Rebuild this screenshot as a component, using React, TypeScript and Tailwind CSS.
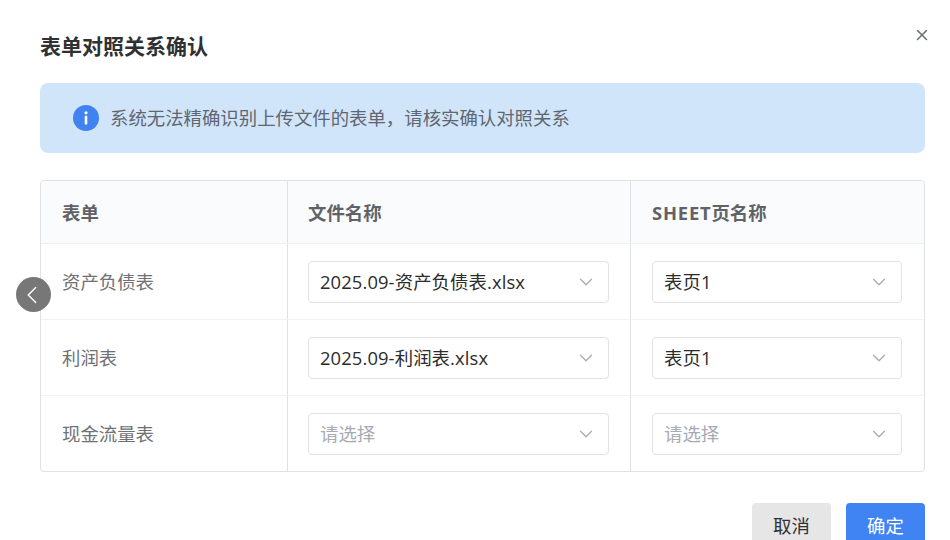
import React from 'react';
import { ChevronDown, ChevronLeft, X } from 'lucide-react';

interface RowData {
  label: string;
  file: string;
  sheet: string;
}

const rows: RowData[] = [
  { label: '资产负债表', file: '2025.09-资产负债表.xlsx', sheet: '表页1' },
  { label: '利润表', file: '2025.09-利润表.xlsx', sheet: '表页1' },
  { label: '现金流量表', file: '', sheet: '' },
];

const SelectBox: React.FC<{ value: string; width: string }> = ({ value, width }) => (
  <div className={`flex h-[42px] items-center justify-between rounded-[4px] border border-[#e2e3e6] bg-white pl-[11px] pr-[11px] ${width}`}>
    {/* placeholder is lighter than a picked value */}
    <span className={value ? 'tracking-[0.1px] text-[#2c2c2c]' : 'text-[#a8abb2]'}>{value || '请选择'}</span>
    <ChevronDown className="h-[22px] w-[22px] text-[#a8abb2]" strokeWidth={1.4} />
  </div>
);

const App: React.FC = () => {
  return (
    <div
      className="relative h-[540px] w-[950px] overflow-hidden bg-white pl-[40px] pr-[25px] text-[18.4px]"
      style={{ fontFamily: '"Open Sans", "Noto Sans CJK SC", sans-serif' }}
    >
      {/* Header */}
      <div className="flex h-[83px] items-start justify-between">
        <h2 className="mt-[31px] text-[21px] leading-[30px] font-bold text-[#303133]">表单对照关系确认</h2>
        <button className="mt-[26px] -mr-[6px] text-[#6b6e73]">
          <X className="h-[18px] w-[18px]" strokeWidth={2} />
        </button>
      </div>

      {/* Notice */}
      <div className="flex h-[70px] items-center gap-[11px] rounded-[8px] bg-[#d0e5fa] pl-[33px] text-[#5f6670]">
        <svg viewBox="0 0 26 26" className="h-[26px] w-[26px]">
          <circle cx="13" cy="13" r="13" fill="#3f82f0" />
          <circle cx="13" cy="7.8" r="1.6" fill="#fff" />
          <rect x="11.7" y="10.8" width="2.6" height="8.8" rx="0.6" fill="#fff" />
        </svg>
        <span>系统无法精确识别上传文件的表单，请核实确认对照关系</span>
      </div>

      {/* Mapping table */}
      <div className="mt-[27px] h-[292px] overflow-hidden rounded-[4px] border border-[#dfe1e5]">
        <div className="grid h-[63px] grid-cols-[246px_343px_1fr] border-b border-[#eeeff1] bg-[#fafbfc] font-bold text-[#606266]">
          <div className="flex items-center pl-[21px] pt-px">表单</div>
          <div className="flex items-center border-l border-[#dfe1e5] pl-[20px] pt-px">文件名称</div>
          <div className="flex items-center border-l border-[#dfe1e5] pl-[21px] pt-px">
            <span className="tracking-[0.8px]">SHEET</span>页名称
          </div>
        </div>
        {rows.map((row, i) => (
          <div
            key={row.label}
            className={`grid h-[76px] grid-cols-[246px_343px_1fr] ${i < 2 ? 'border-b border-[#f0f1f3]' : ''}`}
          >
            <div className="flex items-center pl-[21px] text-[#6f7175]">{row.label}</div>
            <div className="flex items-center border-l border-[#dfe1e5] pl-[20px]">
              <SelectBox value={row.file} width="w-[301px]" />
            </div>
            <div className="flex items-center border-l border-[#dfe1e5] pl-[21px]">
              <SelectBox value={row.sheet} width="w-[250px]" />
            </div>
          </div>
        ))}
      </div>

      {/* Footer, cut off by the bottom of the window */}
      <div className="mt-[31px] flex justify-end gap-[15px]">
        <button className="h-[46px] w-[79px] rounded-[4px] bg-[#e6e6e6] text-[#303133]">取消</button>
        <button className="h-[46px] w-[79px] rounded-[4px] bg-[#3f84f2] text-white">确定</button>
      </div>

      {/* Floating back handle over the table */}
      <div className="absolute left-[16px] top-[277px] flex h-[35px] w-[35px] items-center justify-center rounded-full bg-[#777777]">
        <ChevronLeft className="h-[30px] w-[30px] -translate-x-[2px] text-white" strokeWidth={1.1} />
      </div>
    </div>
  );
};

export default App;
